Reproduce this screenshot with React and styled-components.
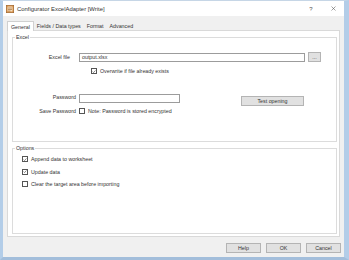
import React from 'react';
import styled, { createGlobalStyle } from 'styled-components';

const GlobalStyle = createGlobalStyle`
  html, body {
    margin: 0;
    padding: 0;
    background: #fff;
  }
  body {
    font-family: "Liberation Sans", Arial, sans-serif;
  }
`;

const Window = styled.div`
  width: 349px;
  height: 260px;
  box-sizing: border-box;
  display: flex;
  flex-direction: column;
  background: #f0f0f0;
  border-top: 1px solid #c6d6e6;
  border-left: 3px solid #b3cde8;
  border-right: 5px solid #b3cde8;
  border-bottom: 3px solid #a3bedb;
  font-family: "Liberation Sans", Arial, sans-serif;
  font-size: 5.3px;
  line-height: 6px;
  color: #2a2a2a;
  overflow: hidden;
`;

const TitleBar = styled.div`
  height: 15px;
  flex: none;
  display: flex;
  align-items: center;
  background: #fff;
  padding-left: 0;
`;

const TitleText = styled.span`
  font-size: 5.9px;
  color: #333;
  margin-left: 3px;
  flex: 1;
`;

const TitleButton = styled.span`
  width: 22px;
  display: flex;
  justify-content: center;
  align-items: center;
  font-size: 6px;
  color: #555;
`;

const Body = styled.div`
  flex: 1;
  display: flex;
  flex-direction: column;
  padding: 4px 4px 0 4px;
`;

const TabRow = styled.div`
  display: flex;
  align-items: flex-end;
  height: 10px;
`;

const Tab = styled.div`
  height: ${(p) => (p.$active ? '10px' : '9px')};
  box-sizing: border-box;
  padding: 0 ${(p) => (p.$active ? '3px' : '2px')};
  display: flex;
  align-items: center;
  background: ${(p) => (p.$active ? '#fff' : '#f0f0f0')};
  border: 1px solid ${(p) => (p.$active ? '#d0d0d0' : 'transparent')};
  border-bottom: none;
  color: #333;
  margin-bottom: ${(p) => (p.$active ? '-1px' : '0')};
  position: relative;
  z-index: 1;
`;

const Panel = styled.div`
  height: 207px;
  box-sizing: border-box;
  background: #fff;
  border: 1px solid #d9d9d9;
  padding: 3px 2px 0 4px;
  display: flex;
  flex-direction: column;
`;

const Group = styled.fieldset`
  margin: ${(p) => p.$top || 0}px 0 0 0;
  padding: 0;
  min-width: 0;
  height: ${(p) => p.$height}px;
  box-sizing: border-box;
  border: 1px solid #dcdcdc;
  display: flex;
  flex-direction: column;
`;

const Legend = styled.legend`
  padding: 0 1px;
  margin-left: 2px;
  line-height: 6px;
  color: #333;
`;

const Row = styled.div`
  display: flex;
  align-items: ${(p) => p.$align || 'center'};
  margin-top: ${(p) => p.$top || 0}px;
  margin-left: ${(p) => p.$indent || 0}px;
`;

const Label = styled.span`
  width: 63px;
  box-sizing: border-box;
  padding-right: ${(p) => p.$pad || 0}px;
  text-align: right;
  flex: none;
  margin-right: 3px;
  color: #333;
`;

const TextBox = styled.div`
  width: ${(p) => p.$width}px;
  height: 9px;
  box-sizing: border-box;
  border: 1px solid #9c9c9c;
  background: #fff;
  display: flex;
  align-items: center;
  padding-left: 2px;
  color: #333;
`;

const Button = styled.div`
  width: ${(p) => p.$width}px;
  height: 10px;
  box-sizing: border-box;
  margin-left: ${(p) => p.$left || 0}px;
  margin-top: ${(p) => p.$mt || 0}px;
  background: #e1e1e1;
  border: 1px solid #b4b4b4;
  display: flex;
  justify-content: center;
  align-items: center;
  color: #333;
  flex: none;
`;

const Box = styled.span`
  width: 6px;
  height: 6px;
  box-sizing: border-box;
  border: 1px solid #555;
  background: #fff;
  flex: none;
  display: flex;
  align-items: center;
  justify-content: center;
  margin-right: 3px;
`;

const CheckText = styled.span`
  color: #333;
  white-space: nowrap;
`;

const OptionList = styled.div`
  display: flex;
  flex-direction: column;
  gap: 6.5px;
  margin: 5px 0 0 9px;
`;

const Footer = styled.div`
  display: flex;
  justify-content: flex-end;
  gap: 5px;
  margin: 6px -1px 0 0;
`;

function Checkbox({ checked, children }) {
  return (
    <Row>
      <Box>
        {checked && (
          <svg width="5" height="5" viewBox="0 0 10 10">
            <path d="M1.5 5.2 L4 7.6 L8.6 2.4" fill="none" stroke="#333" strokeWidth="1.4" />
          </svg>
        )}
      </Box>
      {children && <CheckText>{children}</CheckText>}
    </Row>
  );
}

function AppIcon() {
  return (
    <svg width="8" height="8" viewBox="0 0 16 16" style={{ marginLeft: 3 }}>
      <rect x="0.5" y="0.5" width="15" height="15" fill="#d88a3a" stroke="#8a5520" />
      <rect x="3" y="3" width="10" height="10" fill="#f6e2c6" />
      <path d="M4 6h8M4 9h8M4 12h5" stroke="#9a6024" strokeWidth="1.2" />
    </svg>
  );
}

export default function App() {
  return (
    <>
      <GlobalStyle />
      <Window>
        <TitleBar>
          <AppIcon />
          <TitleText>Configurator ExcelAdapter [Write]</TitleText>
          <TitleButton>?</TitleButton>
          <TitleButton>
            <svg width="5" height="5" viewBox="0 0 10 10">
              <path d="M1 1L9 9M9 1L1 9" stroke="#555" strokeWidth="1.1" />
            </svg>
          </TitleButton>
        </TitleBar>
        <Body>
          <TabRow>
            <Tab $active>General</Tab>
            <Tab>Fields / Data types</Tab>
            <Tab>Format</Tab>
            <Tab>Advanced</Tab>
          </TabRow>
          <Panel>
            <Group $height={108}>
              <Legend>Excel</Legend>
              <Row $top={12}>
                <Label $pad={6}>Excel file</Label>
                <TextBox $width={226}>output.xlsx</TextBox>
                <Button $width={13} $left={3}>...</Button>
              </Row>
              <Row $top={6} $indent={78}>
                <Checkbox checked>Overwrite if file already exists</Checkbox>
              </Row>
              <Row $top={20} $align="flex-start">
                <Label>Password</Label>
                <TextBox $width={101} />
                <Button $width={63} $left={61} $mt={2}>Test opening</Button>
              </Row>
              <Row $top={2}>
                <Label>Save Password</Label>
                <Checkbox>Note: Password is stored encrypted</Checkbox>
              </Row>
            </Group>
            <Group $height={89} $top={3}>
              <Legend>Options</Legend>
              <OptionList>
                <Checkbox checked>Append data to worksheet</Checkbox>
                <Checkbox checked>Update data</Checkbox>
                <Checkbox>Clear the target area before importing</Checkbox>
              </OptionList>
            </Group>
          </Panel>
          <Footer>
            <Button $width={35}>Help</Button>
            <Button $width={35}>OK</Button>
            <Button $width={35}>Cancel</Button>
          </Footer>
        </Body>
      </Window>
    </>
  );
}
